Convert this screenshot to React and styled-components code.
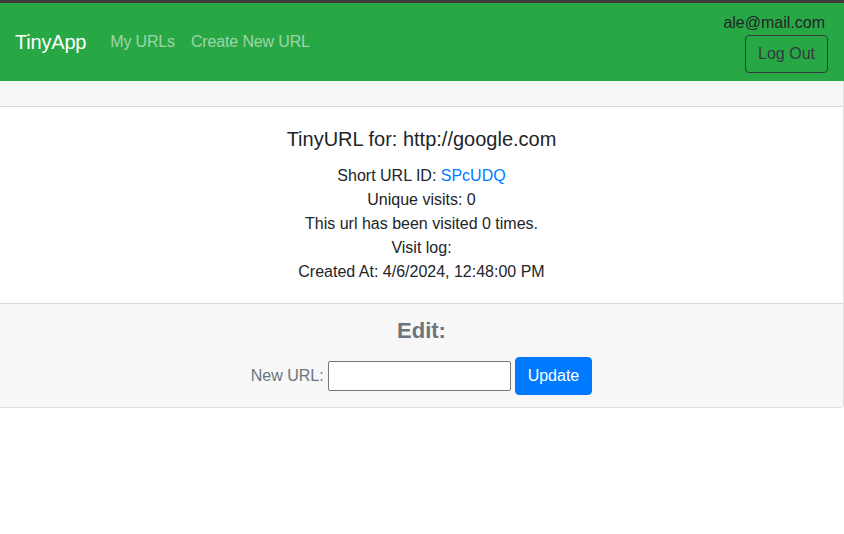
import React from "react";
import styled, { createGlobalStyle } from "styled-components";

const Global = createGlobalStyle`
  html, body { margin: 0; padding: 0; background: #fff; }
  body {
    font-family: "Liberation Sans", Arial, sans-serif;
    font-size: 16px;
    line-height: 1.5;
    color: #212529;
  }
  * { box-sizing: border-box; }
`;

const Nav = styled.nav`
  display: flex;
  align-items: center;
  justify-content: space-between;
  background: #28a745;
  border-top: 3px solid #3d3a3a;
  padding: 8px 16px 8px 15px;
`;

const Left = styled.div`
  display: flex;
  align-items: center;
`;

const Brand = styled.a`
  color: #fff;
  font-size: 20px;
  line-height: 30px;
  margin-right: 16px;
  letter-spacing: -0.2px;
  text-decoration: none;
`;

const NavLink = styled.a`
  color: rgba(255, 255, 255, 0.55);
  padding: 8px;
  letter-spacing: -0.15px;
  text-decoration: none;
`;

const Right = styled.div`
  display: flex;
  flex-direction: column;
  align-items: flex-end;
`;

const Email = styled.span`
  color: #212529;
  line-height: 24px;
  margin-right: 3px;
`;

const OutlineButton = styled.button`
  font: inherit;
  color: #343a40;
  background: transparent;
  border: 1px solid #343a40;
  border-radius: 4px;
  padding: 6px 12px;
  height: 38px;
`;

const Card = styled.div`
  border: 1px solid rgba(0, 0, 0, 0.125);
  border-top: none;
  border-left: none;
  border-radius: 0 0 4px 0;
  text-align: center;
`;

const CardHeader = styled.div`
  background: rgba(0, 0, 0, 0.03);
  border-bottom: 1px solid rgba(0, 0, 0, 0.125);
  height: 26px;
`;

const CardBody = styled.div`
  padding: 20px 20px 19px;
`;

const Title = styled.h5`
  margin: 0 0 13px;
  font-size: 20px;
  font-weight: 500;
  line-height: 1.2;
`;

const Line = styled.p`
  margin: 0;
  line-height: 24px;
`;

const Link = styled.a`
  color: #007bff;
  text-decoration: none;
`;

const CardFooter = styled.div`
  background: rgba(0, 0, 0, 0.03);
  border-top: 1px solid rgba(0, 0, 0, 0.125);
  padding: 12px 20px 12px;
  border-radius: 0 0 4px 0;
`;

const EditTitle = styled.h4`
  margin: 0 0 11px;
  font-size: 22px;
  font-weight: 600;
  line-height: 30px;
  color: #6c757d;
`;

const Form = styled.form`
  display: flex;
  justify-content: center;
  align-items: center;
  gap: 4px;
  color: #6c757d;
`;

const Input = styled.input`
  width: 183px;
  height: 30px;
  border: 1px solid #767676;
  border-radius: 2px;
  background: #fff;
  font: inherit;
`;

const PrimaryButton = styled.button`
  font: inherit;
  color: #fff;
  background: #007bff;
  border: 1px solid #007bff;
  border-radius: 4px;
  height: 38px;
  padding: 6px 12px;
`;

export default function App() {
  return (
    <>
      <Global />
      <Nav>
        <Left>
          <Brand href="#">TinyApp</Brand>
          <NavLink href="#">My URLs</NavLink>
          <NavLink href="#">Create New URL</NavLink>
        </Left>
        <Right>
          <Email>ale@mail.com</Email>
          <OutlineButton>Log Out</OutlineButton>
        </Right>
      </Nav>
      <Card>
        <CardHeader />
        <CardBody>
          <Title>TinyURL for: http://google.com</Title>
          <Line>
            Short URL ID: <Link href="#">SPcUDQ</Link>
          </Line>
          <Line>Unique visits: 0</Line>
          <Line>This url has been visited 0 times.</Line>
          <Line>Visit log:</Line>
          <Line>Created At: 4/6/2024, 12:48:00 PM</Line>
        </CardBody>
        <CardFooter>
          <EditTitle>Edit:</EditTitle>
          <Form onSubmit={(e) => e.preventDefault()}>
            <span>New URL:</span>
            <Input type="text" />
            <PrimaryButton type="submit">Update</PrimaryButton>
          </Form>
        </CardFooter>
      </Card>
    </>
  );
}
